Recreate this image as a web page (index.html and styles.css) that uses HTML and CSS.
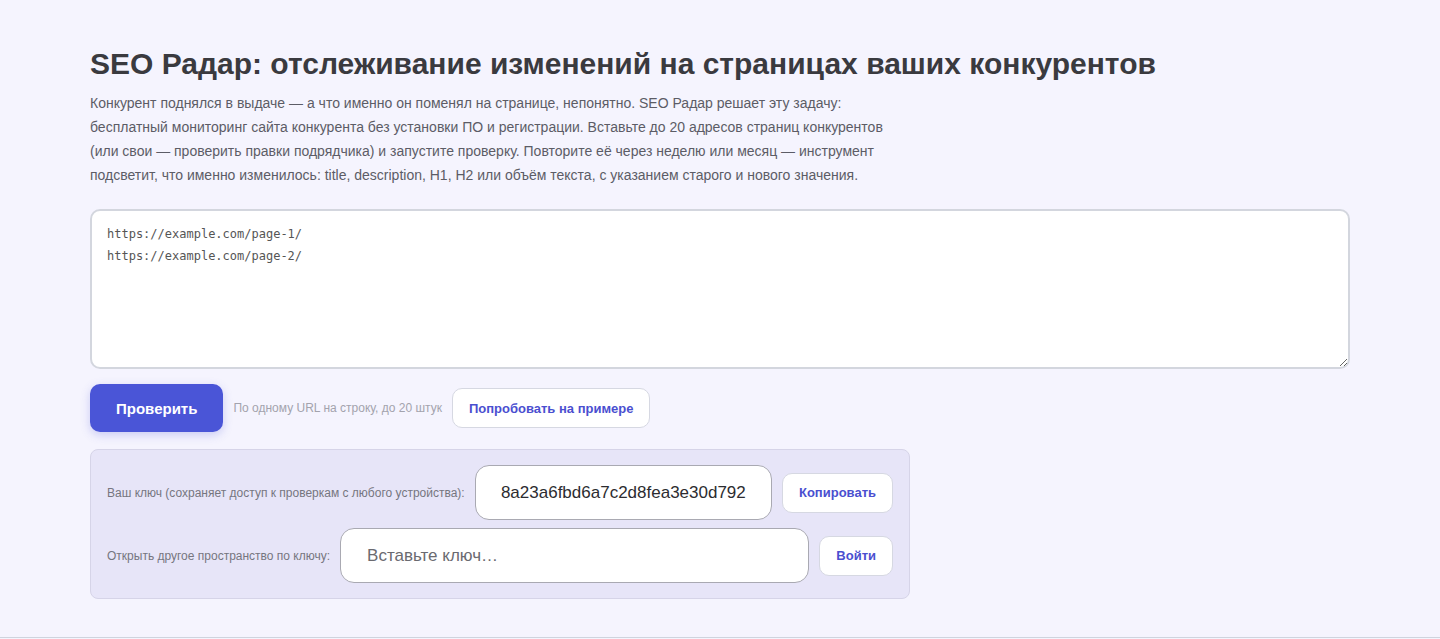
FILE: index.html
```html
<!DOCTYPE html>
<html lang="ru">
<head>
    <meta charset="UTF-8">
    <meta name="viewport" content="width=device-width, initial-scale=1.0">
    <title>SEO Радар</title>
    <link rel="stylesheet" href="styles.css">
</head>
<body>
    <main class="page">
        <h1 class="title">SEO Радар: отслеживание изменений на страницах ваших конкурентов</h1>
        <p class="intro">Конкурент поднялся в выдаче — а что именно он поменял на странице, непонятно. SEO Радар решает эту задачу: бесплатный мониторинг сайта конкурента без установки ПО и регистрации. Вставьте до 20 адресов страниц конкурентов (или свои — проверить правки подрядчика) и запустите проверку. Повторите её через неделю или месяц — инструмент подсветит, что именно изменилось: title, description, H1, H2 или объём текста, с указанием старого и нового значения.</p>

        <textarea class="urls" id="urls">https://example.com/page-1/
https://example.com/page-2/</textarea>

        <div class="actions">
            <button class="btn-primary">Проверить</button>
            <span class="hint">По одному URL на строку, до 20 штук</span>
            <button class="btn-light">Попробовать на примере</button>
        </div>

        <div class="key-panel">
            <div class="key-row">
                <label class="key-label" for="my-key">Ваш ключ (сохраняет доступ к проверкам с любого устройства):</label>
                <input class="key-input key-value" id="my-key" type="text" value="8a23a6fbd6a7c2d8fea3e30d792" readonly>
                <button class="btn-light">Копировать</button>
            </div>
            <div class="key-row">
                <label class="key-label" for="other-key">Открыть другое пространство по ключу:</label>
                <input class="key-input" id="other-key" type="text" placeholder="Вставьте ключ…">
                <button class="btn-light">Войти</button>
            </div>
        </div>
    </main>
    <footer class="footer"></footer>
</body>
</html>
```

FILE: styles.css
```css
body {
    margin: 0;
    background: #f5f4fe;
    font-family: "Liberation Sans", Arial, sans-serif;
    color: #3a3a3f;
}

.page {
    max-width: 1260px;
    margin: 0 auto;
    padding: 46px 90px 38px;
}

.title {
    margin: 0;
    font-size: 30px;
    line-height: 1.2;
    font-weight: 700;
    color: #3a3a3f;
}

.intro {
    max-width: 800px;
    margin: 9px 0 0;
    font-size: 14px;
    line-height: 24px;
    color: #5c5c66;
}

.urls {
    display: block;
    box-sizing: border-box;
    width: 100%;
    height: 160px;
    margin-top: 22px;
    padding: 12px 15px;
    background: #fff;
    border: 2px solid #d3d6de;
    border-radius: 10px;
    font-family: "DejaVu Sans Mono", "Liberation Mono", monospace;
    font-size: 12px;
    line-height: 22px;
    color: #555;
    resize: vertical;
    outline: none;
}

.actions {
    display: flex;
    align-items: center;
    gap: 10px;
    margin-top: 15px;
}

.btn-primary {
    height: 48px;
    padding: 0 26px;
    background: #4a55d7;
    color: #fff;
    border: none;
    border-radius: 10px;
    font-family: inherit;
    font-size: 15px;
    font-weight: 700;
    cursor: pointer;
    box-shadow: 0 3px 10px rgba(74, 85, 215, 0.25);
}

.hint {
    font-size: 12px;
    color: #a3a3ad;
}

.btn-light {
    height: 40px;
    padding: 0 16px;
    background: #fff;
    color: #4a4fd0;
    border: 1px solid #d6d8e2;
    border-radius: 10px;
    font-family: inherit;
    font-size: 13px;
    font-weight: 700;
    cursor: pointer;
}

.key-panel {
    width: 820px;
    box-sizing: border-box;
    margin-top: 17px;
    padding: 15px 16px;
    background: #e7e5f8;
    border: 1px solid #d6d4e8;
    border-radius: 8px;
    display: flex;
    flex-direction: column;
    gap: 8px;
}

.key-row {
    display: flex;
    align-items: center;
    gap: 10px;
}

.key-label {
    font-size: 12px;
    color: #76767f;
}

.key-input {
    flex: 1;
    min-width: 0;
    box-sizing: border-box;
    height: 55px;
    padding: 0 26px;
    background: #fff;
    border: 1px solid #a9a9b2;
    border-radius: 14px;
    font-family: inherit;
    font-size: 17px;
    color: #2c2c30;
    outline: none;
}

.key-value {
    padding: 0 16px;
    text-align: center;
}

.key-input::placeholder {
    color: #6a6a70;
}

.footer {
    border-top: 1px solid #cfd4de;
    height: 1px;
}
```
